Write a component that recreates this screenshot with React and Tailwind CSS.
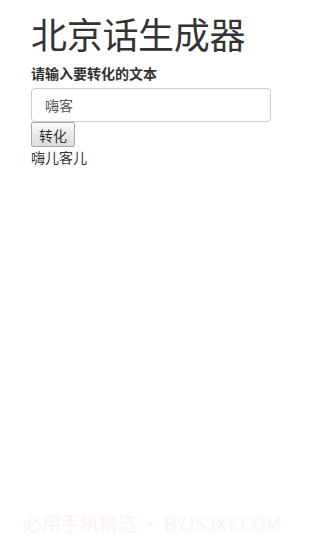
import React from "react";

export default function App() {
  const cjk = { fontFamily: '"Noto Sans CJK SC", "Noto Sans", sans-serif' };
  return (
    <div className="relative w-[304px] h-[545px] bg-white text-[#333]" style={cjk}>
      <div className="px-[31px] pt-[13px]">
        <h1 className="text-[36px] leading-[40px] font-normal mb-[10px] tracking-[-0.3px]">北京话生成器</h1>
        <label className="block text-[14px] leading-[20px] font-bold mb-[5px]">请输入要转化的文本</label>
        <input
          readOnly
          value="嗨客"
          className="block w-[240px] h-[34px] border border-[#ccc] rounded-[4px] pl-[13px] text-[14px] text-[#555] outline-none"
        />
        <button className="block w-[44px] h-[25px] px-0 text-[14px] leading-[20px] border border-[#a9a9a9] rounded-[2px] bg-gradient-to-b from-[#fbfbfb] to-[#dcdcdc] text-[#333]">
          转化
        </button>
        <div className="text-[14px] leading-[20px]">嗨儿客儿</div>
      </div>
      <div className="absolute left-[23px] top-[510px] text-[19px] leading-[26px] text-[#fef0fb] whitespace-nowrap">
        必用手机精选 • BYJSJXY.COM
      </div>
    </div>
  );
}
